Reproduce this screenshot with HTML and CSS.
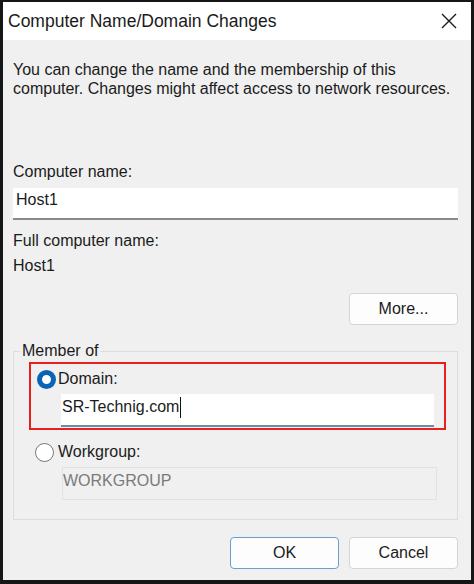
FILE: index.html
```html
<!DOCTYPE html>
<html lang="en">
<head>
<meta charset="utf-8">
<title>Computer Name/Domain Changes</title>
<link rel="stylesheet" href="styles.css">
</head>
<body>
<div class="dialog">
  <div class="titlebar">
    <span class="title">Computer Name/Domain Changes</span>
    <span class="close" aria-label="Close">
      <svg width="16" height="16" viewBox="0 0 16 16"><path d="M1 1 L15 15 M15 1 L1 15" stroke="#1a1a1a" stroke-width="1.4" fill="none"/></svg>
    </span>
  </div>
  <div class="body">
    <p class="intro">You can change the name and the membership of this computer. Changes might affect access to network resources.</p>

    <label class="label name-label">Computer name:</label>
    <div class="field">Host1</div>

    <div class="label full-label">Full computer name:</div>
    <div class="value">Host1</div>

    <div class="more-row"><button class="btn">More...</button></div>

    <fieldset class="group">
      <legend>Member of</legend>
      <div class="highlight">
        <div class="radio-row"><span class="radio checked"></span><span>Domain:</span></div>
        <div class="field domain">SR-Technig.com<span class="caret"></span></div>
      </div>
      <div class="radio-row work"><span class="radio"></span><span>Workgroup:</span></div>
      <div class="field disabled">WORKGROUP</div>
    </fieldset>

    <div class="actions">
      <button class="btn default">OK</button>
      <button class="btn">Cancel</button>
    </div>
  </div>
</div>
</body>
</html>
```
FILE: styles.css
```css
* { box-sizing: border-box; }
html, body { margin: 0; padding: 0; }
body {
  width: 474px;
  height: 584px;
  background: #161616;
  font-family: "Liberation Sans", Arial, sans-serif;
  color: #1b1b1b;
  overflow: hidden;
}
.dialog {
  margin: 2px 3px 0 3px;
  height: 578px;
  background: #f0f0f0;
  display: flex;
  flex-direction: column;
}
.titlebar {
  height: 38px;
  background: #ffffff;
  display: flex;
  align-items: center;
  justify-content: space-between;
  padding: 0 14px 0 5px;
}
.title { font-size: 17.5px; color: #1a1a1a; padding-top: 1px; }
.close { display: flex; width: 16px; height: 16px; }
.body {
  flex: 1;
  padding: 20px 13px 0 10px;
  font-size: 16px;
}
.intro {
  margin: 0;
  line-height: 19px;
  width: 440px;
}
.label { display: block; }
.name-label { margin-top: 65px; }
.field {
  margin-top: 7px;
  height: 32px;
  background: #ffffff;
  border-bottom: 2px solid #8a8a8a;
  padding: 2px 3px 0 3px;
  line-height: 20px;
}
.full-label { margin-top: 12px; }
.value { margin-top: 7px; }
.more-row {
  display: flex;
  justify-content: flex-end;
  margin-top: 18px;
}
.btn {
  width: 109px;
  height: 32px;
  background: #fdfdfd;
  border: 1px solid #d4d4d4;
  border-radius: 4px;
  font-family: inherit;
  font-size: 16px;
  color: #1b1b1b;
  padding: 0;
}
.btn.default { border: 1px solid #6c9ec9; }
.group {
  margin: 17px 0 0 0;
  padding: 0 11px 0 15px;
  border: 1px solid #dcdcdc;
  height: 178px;
}
.group legend {
  padding: 0 2px;
  margin-left: -9px;
  font-size: 16px;
  line-height: 18px;
}
.highlight {
  border: 2px solid #e81f1f;
  margin-top: 2px;
  padding: 5px 10px 1px 6px;
  height: 68px;
}
.radio-row {
  display: flex;
  align-items: center;
  gap: 2px;
  height: 20px;
}
.radio {
  width: 19px;
  height: 19px;
  border-radius: 50%;
  border: 1.5px solid #777777;
  background: #ffffff;
  flex: none;
}
.radio.checked {
  border: 5px solid #0b63b8;
  background: #ffffff;
}
.field.domain {
  margin: 5px 0 0 24px;
  height: 33px;
  border-bottom: 2px solid #6c8ba8;
  padding: 3px 0 0 1px;
  display: flex;
  align-items: flex-start;
}
.caret {
  display: inline-block;
  width: 1px;
  height: 21px;
  background: #111111;
  margin-left: 1px;
}
.radio-row.work { margin: 12px 0 0 6px; gap: 4px; }
.field.disabled {
  margin: 5px 9px 0 33px;
  height: 33px;
  background: #f0f0f0;
  border: 1px solid #e2e2e2;
  color: #7a7a7a;
  padding: 3px 0 0 0;
}
.actions {
  display: flex;
  justify-content: flex-end;
  gap: 10px;
  margin-top: 17px;
}
```
